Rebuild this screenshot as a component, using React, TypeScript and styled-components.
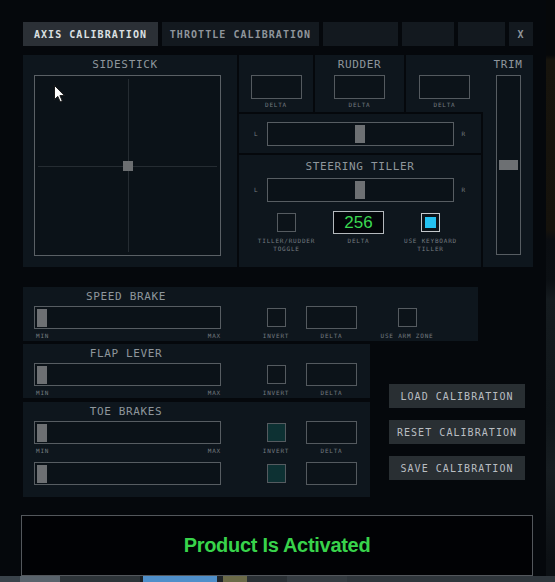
import React from "react";
import styled, { createGlobalStyle } from "styled-components";

const mono = `"DejaVu Sans Mono", "Liberation Mono", monospace`;

const Global = createGlobalStyle`
  html, body { margin: 0; padding: 0; background: #05070b; }
  #root { width: 555px; height: 582px; overflow: hidden; }
  * { box-sizing: border-box; }
`;

/* ---------- desktop frame ---------- */

const Desktop = styled.div`
  width: 555px;
  height: 582px;
  display: flex;
  flex-direction: column;
  background: #05070b;
`;

const Workspace = styled.div`
  flex: 1;
  min-height: 0;
  display: flex;
`;

const Window = styled.div`
  width: 546px;
  flex: none;
  background: #05080c;
  padding: 22px 0 0 21px;
  display: flex;
  flex-direction: column;
`;

const SideStrip = styled.div`
  flex: 1;
  background: linear-gradient(
    to bottom,
    #06080a 0px,
    #06080a 55px,
    #17140d 60px,
    #15120c 230px,
    #0a0d11 240px,
    #0b0f13 280px,
    #151b1f 300px,
    #10161a 420px,
    #171d21 470px,
    #0c1014 560px
  );
`;

const Taskbar = styled.div`
  height: 6px;
  display: flex;
  background: #2f363c;
`;

const TaskSegment = styled.div<{ $w: number; $c: string }>`
  width: ${(p) => p.$w}px;
  flex: none;
  background: ${(p) => p.$c};
`;

const Body = styled.div`
  padding-left: 2px;
  display: flex;
  flex-direction: column;
`;

/* ---------- tabs ---------- */

const TabBar = styled.div`
  display: flex;
  gap: 4px;
  height: 24px;
`;

const Tab = styled.div<{ $w: number; $active?: boolean }>`
  width: ${(p) => p.$w}px;
  height: 24px;
  display: flex;
  align-items: center;
  justify-content: center;
  background: ${(p) => (p.$active ? "#2b3036" : "#13191f")};
  color: ${(p) => (p.$active ? "#dce0e3" : "#8f959b")};
  font: bold 10px ${mono};
  letter-spacing: 1.05px;
  white-space: nowrap;
`;

/* ---------- shared bits ---------- */

const Heading = styled.div`
  height: 12px;
  line-height: 12px;
  font: 11px ${mono};
  letter-spacing: 0.65px;
  color: #8f969c;
  text-align: center;
  white-space: nowrap;
`;

const Tiny = styled.div`
  font: 6px ${mono};
  line-height: 8px;
  letter-spacing: 0.8px;
  color: #747b80;
  text-align: center;
  white-space: nowrap;
`;

const Field = styled.div<{ $h?: number }>`
  width: 51px;
  height: ${(p) => p.$h ?? 24}px;
  border: 1px solid #545a5f;
  background: #0c1319;
`;

const ValueField = styled.div`
  width: 51px;
  height: 23px;
  border: 1px solid #b4b9bd;
  background: #03060a;
  color: #3bd952;
  font: 17px "Liberation Sans", Arial, sans-serif;
  display: flex;
  align-items: center;
  justify-content: center;
`;

const Check = styled.div<{ $tone?: "plain" | "teal" }>`
  width: 19px;
  height: 19px;
  border: 1px solid #555b60;
  background: ${(p) => (p.$tone === "teal" ? "#0d3133" : "#0c1319")};
`;

const CheckOn = styled.div`
  width: 19px;
  height: 19px;
  border: 1px solid #c3c8cc;
  padding: 3px;
  background: #0c1319;
  &::after {
    content: "";
    display: block;
    width: 100%;
    height: 100%;
    background: #24c2f2;
  }
`;

const Track = styled.div<{ $w: number; $h: number }>`
  width: ${(p) => p.$w}px;
  height: ${(p) => p.$h}px;
  border: 1px solid #575d62;
  background: #0b1218;
  display: flex;
  align-items: center;
  justify-content: center;
`;

const HTrack = styled.div`
  width: 187px;
  height: 23px;
  border: 1px solid #575d62;
  background: #0b1218;
  display: flex;
  align-items: center;
  padding-left: 2px;
`;

const Handle = styled.div<{ $w: number; $h: number }>`
  width: ${(p) => p.$w}px;
  height: ${(p) => p.$h}px;
  background: #6d7073;
`;

/* ---------- top section ---------- */

const TopGrid = styled.div`
  margin-top: 9px;
  display: grid;
  grid-template-columns: 214px 74px 89px 75px 50px;
  grid-template-rows: 57px 39px 112px;
  gap: 2px;
  grid-template-areas:
    "stick left rudder right trim"
    "stick lr lr lr trim"
    "stick tiller tiller tiller trim";
`;

const Cell = styled.div<{ $area: string; $pt?: number; $joinRight?: boolean }>`
  grid-area: ${(p) => p.$area};
  background: #0e161d;
  display: flex;
  flex-direction: column;
  align-items: center;
  padding-top: ${(p) => p.$pt ?? 3}px;
  margin-right: ${(p) => (p.$joinRight ? "-2px" : "0")};
`;

const StickCell = styled(Cell)`
  align-items: flex-start;
  padding-left: 11px;
`;

const StickColumn = styled.div`
  width: 187px;
  display: flex;
  flex-direction: column;
`;

const StickHeading = styled(Heading)`
  padding-right: 5px;
`;

const StickPad = styled.div`
  position: relative;
  margin-top: 5px;
  width: 187px;
  height: 181px;
  border: 1px solid #5a6065;
  background: #0b1218;
`;

const AxisV = styled.div`
  position: absolute;
  left: 50%;
  top: 3px;
  bottom: 3px;
  width: 1px;
  background: #252c32;
`;

const AxisH = styled.div`
  position: absolute;
  top: 50%;
  left: 3px;
  right: 3px;
  height: 1px;
  background: #252c32;
`;

const StickKnob = styled.div`
  position: absolute;
  left: 50%;
  top: 50%;
  width: 10px;
  height: 10px;
  transform: translate(-50%, -50%);
  background: #6b6e71;
`;

const Pointer = styled.svg`
  position: absolute;
  left: 19px;
  top: 9px;
`;

const FieldSlot = styled.div`
  margin-top: 5px;
  display: flex;
  flex-direction: column;
  align-items: center;
  gap: 2px;
`;

const TrimTrack = styled(Track)`
  margin-top: 5px;
`;

const SliderRow = styled.div`
  display: flex;
  align-items: center;
  justify-content: center;
  gap: 8px;
  height: 100%;
  width: 100%;
`;

const TillerSlider = styled(SliderRow)`
  height: auto;
  margin-top: 6px;
`;

const TillerControls = styled.div`
  margin-top: 9px;
  display: flex;
  justify-content: center;
  padding-right: 3px;
`;

const TillerItem = styled.div`
  width: 72px;
  display: flex;
  flex-direction: column;
  align-items: center;
`;

const Slot = styled.div`
  height: 23px;
  display: flex;
  align-items: center;
  justify-content: center;
`;

const SlotLabel = styled(Tiny)`
  margin-top: 3px;
`;

/* ---------- axis panels ---------- */

const Middle = styled.div`
  margin-top: 20px;
  display: flex;
  flex-direction: column;
  gap: 3px;
`;

const AxisPanel = styled.div<{ $w: number; $h: number }>`
  width: ${(p) => p.$w}px;
  height: ${(p) => p.$h}px;
  background: #0e161d;
  padding: 3px 0 0 11px;
  display: flex;
  flex-direction: column;
`;

const PanelTitle = styled(Heading)`
  width: 187px;
  padding-right: 3px;
`;

const Rows = styled.div`
  margin-top: 4px;
  display: flex;
  flex-direction: column;
  gap: 7px;
`;

const AxisRow = styled.div`
  display: flex;
  align-items: flex-start;
`;

const SliderColumn = styled.div`
  width: 187px;
  display: flex;
  flex-direction: column;
`;

const Scale = styled.div`
  margin-top: 3px;
  display: flex;
  justify-content: space-between;
  padding: 0 0 0 2px;
  font: 6px ${mono};
  line-height: 8px;
  letter-spacing: 0.8px;
  color: #747b80;
`;

const ControlItem = styled.div<{ $w: number; $ml: number }>`
  width: ${(p) => p.$w}px;
  margin-left: ${(p) => p.$ml}px;
  display: flex;
  flex-direction: column;
  align-items: center;
`;

const LowerRow = styled.div`
  display: flex;
  align-items: flex-start;
`;

const PanelStack = styled.div`
  display: flex;
  flex-direction: column;
  gap: 4px;
`;

const ButtonColumn = styled.div`
  margin-left: 19px;
  padding-top: 40px;
  display: flex;
  flex-direction: column;
  gap: 12px;
`;

const ActionButton = styled.button`
  width: 136px;
  height: 24px;
  border: none;
  padding: 0;
  background: #292f33;
  color: #b9bec2;
  font: 10px ${mono};
  letter-spacing: 1.05px;
  cursor: pointer;
`;

/* ---------- activation ---------- */

const StatusBox = styled.div`
  margin-top: 18px;
  width: 512px;
  height: 61px;
  border: 1px solid #53575c;
  background: #010205;
  display: flex;
  align-items: center;
  justify-content: center;
  color: #38d34b;
  font: bold 20px "Liberation Sans", Arial, sans-serif;
  letter-spacing: -0.3px;
`;

/* ---------- pieces ---------- */

type ControlSpec = {
  kind: "check" | "field";
  label?: string;
  w: number;
  ml: number;
  tone?: "plain" | "teal";
};

function Controls({ items }: { items: ControlSpec[] }) {
  return (
    <>
      {items.map((c, i) => (
        <ControlItem key={i} $w={c.w} $ml={c.ml}>
          <Slot>{c.kind === "check" ? <Check $tone={c.tone} /> : <Field $h={23} />}</Slot>
          {c.label && <SlotLabel>{c.label}</SlotLabel>}
        </ControlItem>
      ))}
    </>
  );
}

function AxisSlider({ scale }: { scale?: boolean }) {
  return (
    <SliderColumn>
      <HTrack>
        <Handle $w={10} $h={18} />
      </HTrack>
      {scale && (
        <Scale>
          <span>MIN</span>
          <span>MAX</span>
        </Scale>
      )}
    </SliderColumn>
  );
}

export default function App() {
  return (
    <Desktop>
      <Global />
      <Workspace>
        <Window>
          <Body>
            <TabBar>
              <Tab $w={135} $active>AXIS CALIBRATION</Tab>
              <Tab $w={157}>THROTTLE CALIBRATION</Tab>
              <Tab $w={75} />
              <Tab $w={52} />
              <Tab $w={47} />
              <Tab $w={24}>X</Tab>
            </TabBar>

            <TopGrid>
              <StickCell $area="stick">
                <StickColumn>
                  <StickHeading>SIDESTICK</StickHeading>
                  <StickPad>
                    <AxisV />
                    <AxisH />
                    <StickKnob />
                    <Pointer width="12" height="18" viewBox="0 0 12 18">
                      <path
                        d="M0.5 0.5 L0.5 14.5 L3.8 11.4 L6.2 16.8 L8.3 15.9 L5.9 10.6 L10.5 10.6 Z"
                        fill="#ffffff"
                        stroke="#1a1a1a"
                        strokeWidth="1"
                      />
                    </Pointer>
                  </StickPad>
                </StickColumn>
              </StickCell>

              <Cell $area="left">
                <Heading />
                <FieldSlot>
                  <Field />
                  <Tiny>DELTA</Tiny>
                </FieldSlot>
              </Cell>

              <Cell $area="rudder">
                <Heading>RUDDER</Heading>
                <FieldSlot>
                  <Field />
                  <Tiny>DELTA</Tiny>
                </FieldSlot>
              </Cell>

              <Cell $area="right" $joinRight>
                <Heading />
                <FieldSlot>
                  <Field />
                  <Tiny>DELTA</Tiny>
                </FieldSlot>
              </Cell>

              <Cell $area="trim">
                <Heading>TRIM</Heading>
                <TrimTrack $w={25} $h={180}>
                  <Handle $w={19} $h={10} />
                </TrimTrack>
              </Cell>

              <Cell $area="lr" $pt={0}>
                <SliderRow>
                  <Tiny>L</Tiny>
                  <Track $w={187} $h={24}>
                    <Handle $w={10} $h={18} />
                  </Track>
                  <Tiny>R</Tiny>
                </SliderRow>
              </Cell>

              <Cell $area="tiller" $pt={5}>
                <Heading>STEERING TILLER</Heading>
                <TillerSlider>
                  <Tiny>L</Tiny>
                  <Track $w={187} $h={24}>
                    <Handle $w={10} $h={18} />
                  </Track>
                  <Tiny>R</Tiny>
                </TillerSlider>
                <TillerControls>
                  <TillerItem>
                    <Slot>
                      <Check />
                    </Slot>
                    <SlotLabel>
                      TILLER/RUDDER
                      <br />
                      TOGGLE
                    </SlotLabel>
                  </TillerItem>
                  <TillerItem>
                    <Slot>
                      <ValueField>256</ValueField>
                    </Slot>
                    <SlotLabel>DELTA</SlotLabel>
                  </TillerItem>
                  <TillerItem>
                    <Slot>
                      <CheckOn />
                    </Slot>
                    <SlotLabel>
                      USE KEYBOARD
                      <br />
                      TILLER
                    </SlotLabel>
                  </TillerItem>
                </TillerControls>
              </Cell>
            </TopGrid>

            <Middle>
              <AxisPanel $w={455} $h={54}>
                <PanelTitle>SPEED BRAKE</PanelTitle>
                <Rows>
                  <AxisRow>
                    <AxisSlider scale />
                    <Controls
                      items={[
                        { kind: "check", label: "INVERT", w: 40, ml: 35 },
                        { kind: "field", label: "DELTA", w: 51, ml: 10 },
                        { kind: "check", label: "USE ARM ZONE", w: 60, ml: 20 },
                      ]}
                    />
                  </AxisRow>
                </Rows>
              </AxisPanel>

              <LowerRow>
                <PanelStack>
                  <AxisPanel $w={347} $h={54}>
                    <PanelTitle>FLAP LEVER</PanelTitle>
                    <Rows>
                      <AxisRow>
                        <AxisSlider scale />
                        <Controls
                          items={[
                            { kind: "check", label: "INVERT", w: 40, ml: 35 },
                            { kind: "field", label: "DELTA", w: 51, ml: 10 },
                          ]}
                        />
                      </AxisRow>
                    </Rows>
                  </AxisPanel>

                  <AxisPanel $w={347} $h={95}>
                    <PanelTitle>TOE BRAKES</PanelTitle>
                    <Rows>
                      <AxisRow>
                        <AxisSlider scale />
                        <Controls
                          items={[
                            { kind: "check", label: "INVERT", w: 40, ml: 35, tone: "teal" },
                            { kind: "field", label: "DELTA", w: 51, ml: 10 },
                          ]}
                        />
                      </AxisRow>
                      <AxisRow>
                        <AxisSlider />
                        <Controls
                          items={[
                            { kind: "check", w: 40, ml: 35, tone: "teal" },
                            { kind: "field", w: 51, ml: 10 },
                          ]}
                        />
                      </AxisRow>
                    </Rows>
                  </AxisPanel>
                </PanelStack>

                <ButtonColumn>
                  <ActionButton>LOAD CALIBRATION</ActionButton>
                  <ActionButton>RESET CALIBRATION</ActionButton>
                  <ActionButton>SAVE CALIBRATION</ActionButton>
                </ButtonColumn>
              </LowerRow>
            </Middle>
          </Body>

          <StatusBox>Product Is Activated</StatusBox>
        </Window>
        <SideStrip />
      </Workspace>
      <Taskbar>
        <TaskSegment $w={20} $c="#3a434b" />
        <TaskSegment $w={40} $c="#59636c" />
        <TaskSegment $w={80} $c="#2d3439" />
        <TaskSegment $w={3} $c="#1c2125" />
        <TaskSegment $w={74} $c="#4f8fca" />
        <TaskSegment $w={6} $c="#1f2428" />
        <TaskSegment $w={24} $c="#6b6a48" />
        <TaskSegment $w={40} $c="#2a3035" />
        <TaskSegment $w={60} $c="#353c42" />
        <TaskSegment $w={208} $c="#2f363c" />
      </Taskbar>
    </Desktop>
  );
}
